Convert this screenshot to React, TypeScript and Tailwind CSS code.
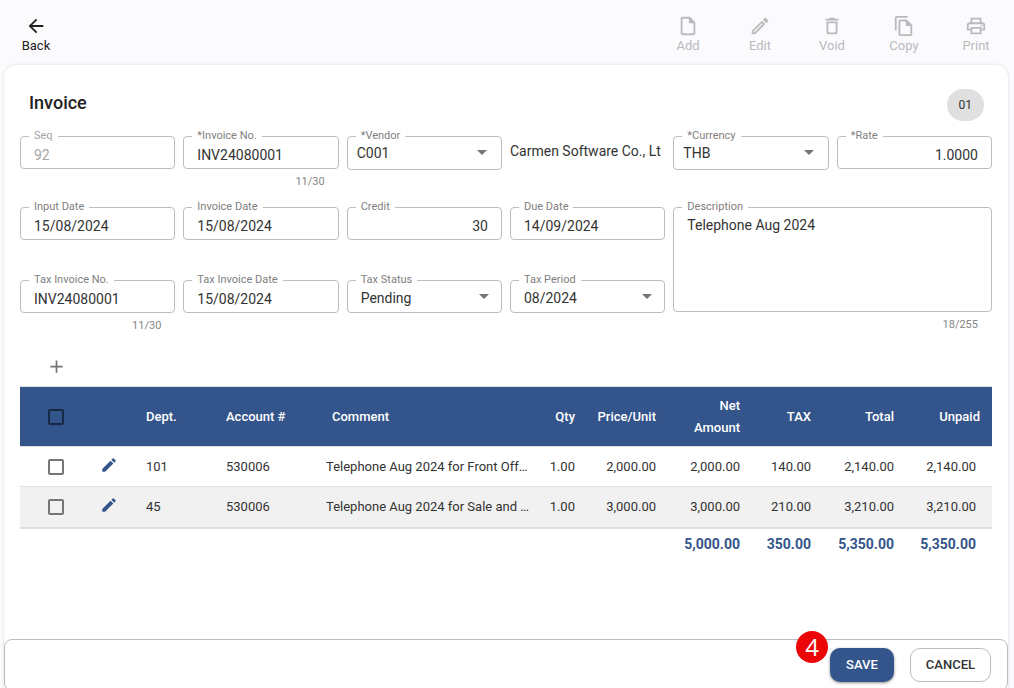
import type { ReactNode } from "react";
import type { IconType } from "react-icons";
import {
  MdAdd,
  MdArrowBack,
  MdArrowDropDown,
  MdDeleteOutline,
  MdEdit,
  MdOutlineEdit,
  MdOutlineFileCopy,
  MdOutlineInsertDriveFile,
  MdOutlinePrint,
} from "react-icons/md";

const actions: { label: string; icon: IconType }[] = [
  { label: "Add", icon: MdOutlineInsertDriveFile },
  { label: "Edit", icon: MdOutlineEdit },
  { label: "Void", icon: MdDeleteOutline },
  { label: "Copy", icon: MdOutlineFileCopy },
  { label: "Print", icon: MdOutlinePrint },
];

const rows = [
  {
    dept: "101",
    account: "530006",
    comment: "Telephone Aug 2024 for Front Off…",
    amounts: ["1.00", "2,000.00", "2,000.00", "140.00", "2,140.00", "2,140.00"],
  },
  {
    dept: "45",
    account: "530006",
    comment: "Telephone Aug 2024 for Sale and …",
    amounts: ["1.00", "3,000.00", "3,000.00", "210.00", "3,210.00", "3,210.00"],
  },
];

const totals = ["5,000.00", "350.00", "5,350.00", "5,350.00"];

const control =
  "block w-full rounded border border-[#bdbdbd] bg-white text-sm leading-5 text-[#333] outline-none";

function Field({
  id,
  label,
  counter,
  muted,
  className = "",
  children,
}: {
  id: string;
  label: string;
  counter?: string;
  muted?: boolean;
  className?: string;
  children: ReactNode;
}) {
  return (
    <div className={`relative min-w-0 ${className}`}>
      {children}
      <label
        htmlFor={id}
        className={`absolute -top-[7px] left-[9px] bg-white px-[5px] text-[11px] leading-[14px] ${
          muted ? "text-[#a6a6a6]" : "text-[#808080]"
        }`}
      >
        {label}
      </label>
      {counter && (
        <p className="pt-[3px] pr-[14px] text-right text-[11px] leading-5 text-[#858585]">{counter}</p>
      )}
    </div>
  );
}

function TextField(props: {
  id: string;
  label: string;
  value: string;
  counter?: string;
  disabled?: boolean;
  right?: boolean;
}) {
  const { id, label, value, counter, disabled, right } = props;
  return (
    <Field id={id} label={label} counter={counter} muted={disabled}>
      <input
        id={id}
        type="text"
        defaultValue={value}
        disabled={disabled}
        className={`${control} h-[33px] px-[13px] pt-1 disabled:text-[#a6a6a6] ${right ? "text-right" : ""}`}
      />
    </Field>
  );
}

function SelectField(props: { id: string; label: string; value: string; lookup?: boolean }) {
  const { id, label, value, lookup } = props;
  return (
    <Field id={id} label={label}>
      <select
        id={id}
        defaultValue={value}
        className={`${control} appearance-none pr-8 ${lookup ? "h-[34px] pl-[9px]" : "h-[33px] pl-[13px] pt-[2px]"}`}
      >
        <option>{value}</option>
      </select>
      <MdArrowDropDown
        size={24}
        className={`pointer-events-none absolute top-1 text-[#757575] ${lookup ? "right-2" : "right-[6px]"}`}
      />
    </Field>
  );
}

function Tick({ label, dark }: { label: string; dark?: boolean }) {
  return (
    <input
      type="checkbox"
      aria-label={label}
      className={`block size-4 appearance-none rounded-[2px] border-2 ${
        dark ? "border-[#182a46]" : "border-[#757575]"
      }`}
    />
  );
}

export default function App() {
  return (
    <div className="flex h-screen flex-col overflow-hidden bg-[#fbfbfe] font-[Roboto,sans-serif] text-[#212121]">
      <header className="flex h-[65px] shrink-0 items-start justify-between pt-[15px] pr-[2px]">
        <button type="button" className="flex w-[72px] flex-col items-center">
          <MdArrowBack size={22} />
          <span className="text-[13px] leading-[18px]">Back</span>
        </button>
        <nav aria-label="Invoice actions" className="flex">
          {actions.map(({ label, icon: Icon }) => (
            <button
              key={label}
              type="button"
              disabled
              className="flex w-[72px] flex-col items-center text-[#bababc]"
            >
              <Icon size={22} />
              <span className="text-[13px] leading-[18px]">{label}</span>
            </button>
          ))}
        </nav>
      </header>

      <main className="mx-1 mr-[6px] flex min-h-0 flex-1 flex-col rounded-t-xl bg-white shadow-[0_0_3px_rgba(0,0,0,0.14)]">
        <div className="flex-1 px-4">
          <div className="flex items-start justify-between pt-6 pr-2 pl-[9px]">
            <h1 className="text-lg leading-7 font-medium">Invoice</h1>
            <span className="rounded-2xl bg-[#e0e0e0] px-3 text-xs leading-8 text-[#333]">01</span>
          </div>

          <form className="grid grid-cols-6 grid-rows-[56px_58px_56px] gap-x-2 gap-y-[15px] pt-[15px]">
            <TextField id="seq" label="Seq" value="92" disabled />
            <TextField id="invoice-no" label="*Invoice No." value="INV24080001" counter="11/30" />
            <SelectField id="vendor" label="*Vendor" value="C001" lookup />
            <p className="overflow-hidden pt-[5px] text-sm leading-5 whitespace-nowrap text-[#333]">
              Carmen Software Co., Lt
            </p>
            <SelectField id="currency" label="*Currency" value="THB" lookup />
            <TextField id="rate" label="*Rate" value="1.0000" right />

            <TextField id="input-date" label="Input Date" value="15/08/2024" />
            <TextField id="invoice-date" label="Invoice Date" value="15/08/2024" />
            <TextField id="credit" label="Credit" value="30" right />
            <TextField id="due-date" label="Due Date" value="14/09/2024" />
            <Field
              id="description"
              label="Description"
              counter="18/255"
              className="col-span-2 row-span-2"
            >
              <textarea
                id="description"
                defaultValue="Telephone Aug 2024"
                className={`${control} h-[105px] resize-none px-[13px] pt-[7px]`}
              />
            </Field>

            <TextField id="tax-invoice-no" label="Tax Invoice No." value="INV24080001" counter="11/30" />
            <TextField id="tax-invoice-date" label="Tax Invoice Date" value="15/08/2024" />
            <SelectField id="tax-status" label="Tax Status" value="Pending" />
            <SelectField id="tax-period" label="Tax Period" value="08/2024" />
          </form>

          <div className="flex pt-5 pb-[9px] pl-[26px]">
            <button type="button" aria-label="Add line" className="text-[#757575]">
              <MdAdd size={21} />
            </button>
          </div>

          <table className="w-full table-fixed border-collapse text-[13px] leading-[22px]">
            <colgroup>
              <col className="w-[72px]" />
              <col className="w-[46px]" />
              <col className="w-[80px]" />
              <col className="w-[100px]" />
              <col />
              <col className="w-[50px]" />
              <col className="w-[81px]" />
              <col className="w-[84px]" />
              <col className="w-[71px]" />
              <col className="w-[83px]" />
              <col className="w-[90px]" />
            </colgroup>
            <thead>
              <tr className="h-[60px] border-y border-[#e0e0e0] bg-[#34558b] text-white">
                <th className="pl-7">
                  <Tick label="Select all lines" dark />
                </th>
                <th aria-label="Edit" />
                <th className="pl-2 text-left font-medium">Dept.</th>
                <th className="pl-2 text-left font-medium">Account #</th>
                <th className="pl-[14px] text-left font-medium">Comment</th>
                <th className="pr-2 text-right font-medium">Qty</th>
                <th className="pr-2 text-right font-medium">Price/Unit</th>
                <th className="pr-2 pl-6 text-right font-medium">Net Amount</th>
                <th className="pr-2 text-right font-medium">TAX</th>
                <th className="pr-2 text-right font-medium">Total</th>
                <th className="pr-3 text-right font-medium">Unpaid</th>
              </tr>
            </thead>
            <tbody className="text-[#333]">
              {rows.map((row) => (
                <tr
                  key={row.dept}
                  className="h-10 border-b border-[#e0e0e0] last:h-[41px] last:border-b-2 even:bg-[#f1f1f1]"
                >
                  <td className="pl-7">
                    <Tick label={`Select line ${row.dept}`} />
                  </td>
                  <td className="pl-2">
                    <button
                      type="button"
                      aria-label={`Edit line ${row.dept}`}
                      className="block pb-1 text-[#34558b]"
                    >
                      <MdEdit size={18} />
                    </button>
                  </td>
                  <td className="pl-2">{row.dept}</td>
                  <td className="pl-2">{row.account}</td>
                  <td className="pl-2 whitespace-nowrap">{row.comment}</td>
                  {row.amounts.map((amount, i) => (
                    <td key={i} className="pr-2 text-right last:pr-4">
                      {amount}
                    </td>
                  ))}
                </tr>
              ))}
            </tbody>
            <tfoot>
              <tr className="h-8 text-sm font-bold text-[#34558b]">
                <td colSpan={7} />
                {totals.map((total, i) => (
                  <td key={i} className="pr-2 text-right last:pr-4">
                    {total}
                  </td>
                ))}
              </tr>
            </tfoot>
          </table>
        </div>

        <footer className="-mb-[3px] flex h-[52px] shrink-0 items-start justify-end gap-4 rounded-lg border border-[#bdbdbd] bg-white pt-2 pr-4">
          <div className="relative">
            <button
              type="button"
              className="h-[34px] rounded-[10px] bg-[#34558b] px-4 text-[13px] font-medium text-white shadow-[0_1px_3px_rgba(0,0,0,0.45)]"
            >
              SAVE
            </button>
            <span className="absolute -top-[17px] -left-[34px] flex size-8 items-center justify-center rounded-full bg-[#eb0707] font-['Open_Sans',sans-serif] text-2xl text-white">
              4
            </span>
          </div>
          <button
            type="button"
            className="h-[34px] rounded-[10px] border border-[#bdbdbd] bg-white px-[15px] text-[13px] font-medium text-[#333]"
          >
            CANCEL
          </button>
        </footer>
      </main>
    </div>
  );
}
